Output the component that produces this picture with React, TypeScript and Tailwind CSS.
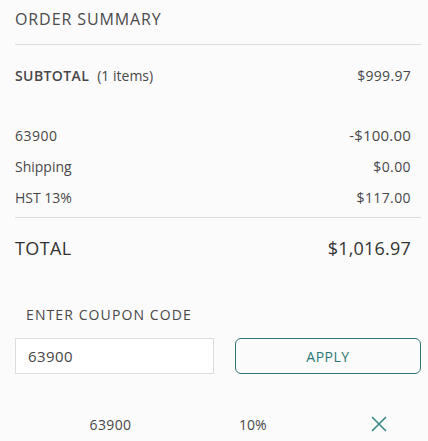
import React, { useState } from "react";

type Line = {
  label: string;
  value: string;
};

const lines: Line[] = [
  { label: "Shipping", value: "$0.00" },
  { label: "HST 13%", value: "$117.00" },
];

function App() {
  const [code, setCode] = useState("63900");

  return (
    <div
      className="w-[428px] h-[441px] bg-[#fcfbfc] text-[#484848] pl-[15px] pr-[7px]"
      style={{ fontFamily: "'Open Sans', Lato, sans-serif" }}
    >
      <div className="h-[45px] pt-[9px] border-b border-[#dcdcdc]">
        <h2 className="text-[16px] leading-[20px] font-normal tracking-[0.9px] text-[#4a4a4a]">
          ORDER SUMMARY
        </h2>
      </div>

      <div className="flex justify-between items-center h-[20px] mt-[20px] pr-[10px] text-[14px]">
        <div>
          <span className="font-semibold tracking-[0.4px]">SUBTOTAL</span>
          <span className="ml-[8px]">(1 items)</span>
        </div>
        <span className="tracking-[0.3px]">$999.97</span>
      </div>

      <div className="flex justify-between items-center h-[20px] mt-[40px] pr-[10px]">
        <span className="text-[14px] tracking-[0.5px]">63900</span>
        <span className="text-[15px] tracking-[0.2px]">-$100.00</span>
      </div>

      {lines.map((l) => (
        <div
          key={l.label}
          className="flex justify-between items-center h-[20px] mt-[11px] pr-[10px] text-[14px]"
        >
          <span>{l.label}</span>
          <span className="tracking-[0.4px]">{l.value}</span>
        </div>
      ))}

      <div className="mt-[10px] border-b border-[#dcdcdc]" />

      <div className="flex justify-between items-center h-[24px] mt-[18px] pr-[10px] text-[18px] font-medium text-[#333]">
        <span className="tracking-[0.4px]">TOTAL</span>
        <span className="tracking-[0.2px]">$1,016.97</span>
      </div>

      <div className="mt-[44px] h-[20px] pl-[11px] flex items-center text-[14px] font-medium tracking-[1.1px]">
        ENTER COUPON CODE
      </div>

      <div className="flex mt-[14px] gap-[21px]">
        <input
          value={code}
          onChange={(e) => setCode(e.target.value)}
          className="w-[199px] h-[36px] border border-[#dcdcdc] bg-white px-[12px] text-[15px] tracking-[0.4px] text-[#444] outline-none"
        />
        <button className="flex-1 h-[36px] border border-[#2a7775] rounded-[6px] text-[#2a7775] text-[14px] tracking-[0.5px]">
          APPLY
        </button>
      </div>

      <div className="flex items-center h-[20px] mt-[40px] text-[14px]">
        <span className="w-[199px] text-center pr-[8px] tracking-[0.4px]">63900</span>
        <span className="ml-[25px]">10%</span>
        <button className="ml-auto mr-[33px] text-[#3a8785]">
          <svg width="18" height="18" viewBox="0 0 18 18" fill="none">
            <path d="M2 2L16 16M16 2L2 16" stroke="currentColor" strokeWidth="1.6" />
          </svg>
        </button>
      </div>
    </div>
  );
}

export default App;
